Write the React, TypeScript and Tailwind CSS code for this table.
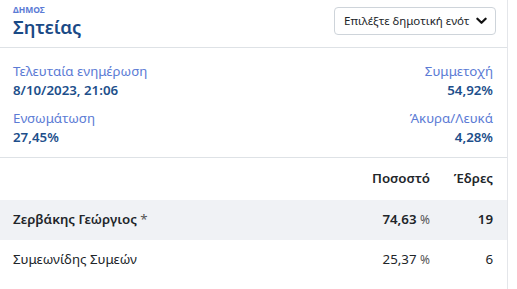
import React from 'react';

const rows = [
  { name: 'Ζερβάκης Γεώργιος', pct: '74,63', seats: '19', win: true },
  { name: 'Συμεωνίδης Συμεών', pct: '25,37', seats: '6', win: false },
];

function Stat({ label, value, right }: { label: string; value: string; right?: boolean }) {
  return (
    <div className={right ? 'text-right' : ''}>
      <div className="text-[13.3px] leading-[19px] text-[#5b7bd5]">{label}</div>
      <div className="text-[13.3px] leading-[19px] font-semibold text-[#1d4f8b]">{value}</div>
    </div>
  );
}

export default function App() {
  return (
    <div className="w-[508px] min-h-[289px] bg-white border-r border-[#e4e6ea] text-[#212529]" style={{ fontFamily: '"Noto Sans", "Open Sans", sans-serif' }}>
      {/* header */}
      <div className="flex items-start justify-between pl-[13px] pr-[11px] pt-[7px] h-[48px] border-b border-[#dee2e6]">
        <div className="-mt-[2px]">
          <div className="text-[8.5px] leading-[9px] font-bold uppercase text-[#5b7bd5]">Δημος</div>
          <div className="text-[18.5px] leading-[25px] font-semibold text-[#1a4a86]">Σητείας</div>
        </div>
        <div className="w-[162px] h-[28px] flex items-center justify-between pl-[9px] pr-[8px] border border-[#ced4da] rounded-[4px] text-[11.5px] text-[#212529]">
          <span className="whitespace-nowrap overflow-hidden">Επιλέξτε δημοτική ενότ</span>
          <svg width="11" height="8" viewBox="0 0 12 8" className="shrink-0">
            <path d="M1.5 1.5 L6 6 L10.5 1.5" fill="none" stroke="#111" strokeWidth="2.4" strokeLinecap="round" strokeLinejoin="round" />
          </svg>
        </div>
      </div>

      {/* stats */}
      <div className="grid grid-cols-2 gap-y-[9px] pl-[13px] pr-[14px] pt-[14px] pb-[10px] border-b border-[#dee2e6]">
        <Stat label="Τελευταία ενημέρωση" value="8/10/2023, 21:06" />
        <Stat label="Συμμετοχή" value="54,92%" right />
        <Stat label="Ενσωμάτωση" value="27,45%" />
        <Stat label="Άκυρα/Λευκά" value="4,28%" right />
      </div>

      {/* table */}
      <div className="text-[13.3px]">
        <div className="flex items-center h-[42px] pl-[13px] pr-[14px] font-semibold">
          <div className="flex-1" />
          <div className="w-[90px] text-right">Ποσοστό</div>
          <div className="w-[63px] text-right">Έδρες</div>
        </div>
        {rows.map((r) => (
          <div key={r.name} className={`flex items-center h-[40px] pl-[13px] pr-[14px] ${r.win ? 'bg-[#f0f2f5] font-semibold' : ''}`}>
            <div className="flex-1">
              {r.name}
              {r.win && <span className="font-normal text-[#555]"> *</span>}
            </div>
            <div className="w-[90px] text-right">
              {r.pct} <span className="font-normal text-[12px] text-[#555]">%</span>
            </div>
            <div className="w-[63px] text-right">{r.seats}</div>
          </div>
        ))}
      </div>
    </div>
  );
}
